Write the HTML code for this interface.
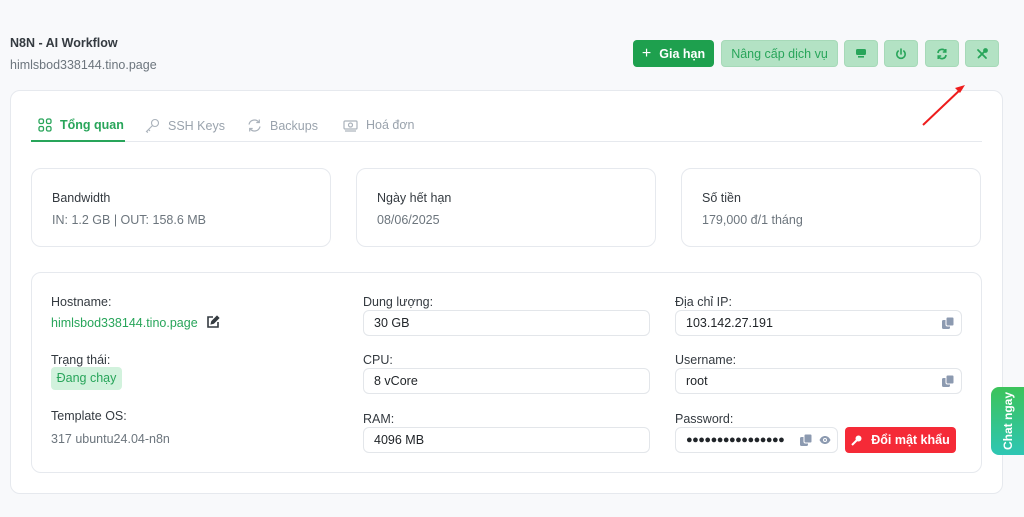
<!DOCTYPE html>
<html><head><meta charset="utf-8"><style>
*{box-sizing:border-box;margin:0;padding:0}
body{width:1024px;height:517px;overflow:hidden;background:#f8f9fb;font-family:"Liberation Sans",sans-serif;color:#212529;position:relative}
.a{position:absolute}
.t13{font-size:12.5px}
.gray{color:#6c757d}
.btn{position:absolute;top:40px;height:27px;border-radius:4px;display:flex;align-items:center;justify-content:center;font-size:12.5px}
.lt{background:#b3e2c4;color:#28a55a;border:1px solid #a6d9b8}
.card{position:absolute;background:#fff;border:1px solid #e6e9ee;border-radius:10px}
.inp{position:absolute;height:26px;border:1px solid #e3e6ea;border-radius:6px;background:#fff;font-size:12.5px;padding-left:10px;line-height:24px}
.lbl{position:absolute;font-size:12.5px;color:#343a40}
.cp{position:absolute;right:6px;top:5px}
</style></head><body>
<div class="a" style="left:10px;top:36px;font-size:12.5px;font-weight:bold;color:#343a40">N8N - AI Workflow</div>
<div class="a gray" style="left:10px;top:58px;font-size:12.5px">himlsbod338144.tino.page</div>

<div class="btn" style="left:633px;width:81px;background:#1ea04e;color:#fff;font-weight:bold"><span style="font-size:16px;font-weight:normal;margin-right:8px">+</span>Gia hạn</div>
<div class="btn lt" style="left:721px;width:117px">Nâng cấp dịch vụ</div>
<div class="btn lt" style="left:844px;width:34px"><svg width="12" height="11" viewBox="0 0 12 11"><rect x="1" y="1" width="10" height="6" rx="1.5" fill="#28a55a"/><rect x="3" y="8" width="6" height="1.6" fill="#28a55a"/></svg></div>
<div class="btn lt" style="left:884px;width:34px"><svg width="12" height="12" viewBox="0 0 12 12" fill="none" stroke="#28a55a" stroke-width="1.6" stroke-linecap="round"><path d="M6 1v5"/><path d="M3.2 3a4.2 4.2 0 1 0 5.6 0"/></svg></div>
<div class="btn lt" style="left:925px;width:34px"><svg width="12" height="12" viewBox="0 0 12 12" fill="none" stroke="#28a55a" stroke-width="1.7"><path d="M2 5a4 4 0 0 1 7.5-1.5"/><path d="M10 7a4 4 0 0 1-7.5 1.5"/><path d="M9.8 1v3h-3M2.2 11V8h3" stroke-width="1.5"/></svg></div>
<div class="btn lt" style="left:965px;width:34px"><svg width="12" height="12" viewBox="0 0 12 12" fill="none" stroke="#28a55a" stroke-width="1.8" stroke-linecap="round"><path d="M2 2l8 8"/><path d="M10 2L4 8"/><path d="M2.5 9.5l1.5-1.5"/><circle cx="9.5" cy="2.5" r="1.5" fill="#28a55a"/></svg></div>

<div class="card" style="left:10px;top:90px;width:993px;height:404px"></div>
<svg class="a" style="left:918px;top:80px;z-index:5" width="52" height="50"><path d="M5 45L44 8" stroke="#ee1c1c" stroke-width="2"/><path d="M47 5l-10 3 5 5z" fill="#ee1c1c"/></svg>

<div class="a" style="left:38px;top:118px;display:flex;align-items:center;font-size:12.5px;color:#28a55a;font-weight:bold">
<svg width="14" height="14" viewBox="0 0 14 14" fill="none" stroke="#28a55a" stroke-width="1.3"><rect x="1" y="1" width="4.5" height="4.5" rx="1.5"/><rect x="8.5" y="1" width="4.5" height="4.5" rx="1.5"/><rect x="1" y="8.5" width="4.5" height="4.5" rx="1.5"/><rect x="8.5" y="8.5" width="4.5" height="4.5" rx="1.5"/></svg><span style="margin-left:8px">Tổng quan</span></div>
<div class="a" style="left:145px;top:118px;display:flex;align-items:center;font-size:12.5px;color:#9aa3ad">
<svg width="15" height="15" viewBox="0 0 15 15" fill="none" stroke="#aab2bb" stroke-width="1.1"><circle cx="10" cy="5" r="3.5"/><path d="M7.5 7.5L1.5 13.5l1.5 1M3.5 11.5l1.5 1.5"/></svg><span style="margin-left:8px">SSH Keys</span></div>
<div class="a" style="left:247px;top:118px;display:flex;align-items:center;font-size:12.5px;color:#9aa3ad">
<svg width="15" height="15" viewBox="0 0 15 15" fill="none" stroke="#aab2bb" stroke-width="1.2"><path d="M2 6.5a5.5 5.5 0 0 1 10-2"/><path d="M13 8.5a5.5 5.5 0 0 1-10 2"/><path d="M12.3 1.5v3h-3M2.7 13.5v-3h3"/></svg><span style="margin-left:8px">Backups</span></div>
<div class="a" style="left:343px;top:118px;display:flex;align-items:center;font-size:12.5px;color:#9aa3ad">
<svg width="15" height="13" viewBox="0 0 15 13" fill="none" stroke="#aab2bb" stroke-width="1.2"><rect x="1" y="2" width="13" height="8" rx="1"/><circle cx="7.5" cy="6" r="2"/><path d="M2 12h11"/></svg><span style="margin-left:8px">Hoá đơn</span></div>
<div class="a" style="left:31px;top:141px;width:951px;height:1px;background:#e6e9ee"></div>
<div class="a" style="left:31px;top:140px;width:94px;height:2px;background:#28a55a"></div>

<div class="card" style="left:31px;top:168px;width:300px;height:79px"><div class="lbl" style="left:20px;top:22px">Bandwidth</div><div class="a gray t13" style="left:20px;top:44px">IN: 1.2 GB | OUT: 158.6 MB</div></div>
<div class="card" style="left:356px;top:168px;width:300px;height:79px"><div class="lbl" style="left:20px;top:22px">Ngày hết hạn</div><div class="a gray t13" style="left:20px;top:44px">08/06/2025</div></div>
<div class="card" style="left:681px;top:168px;width:300px;height:79px"><div class="lbl" style="left:20px;top:22px">Số tiền</div><div class="a gray t13" style="left:20px;top:44px">179,000 đ/1 tháng</div></div>

<div class="card" style="left:31px;top:272px;width:951px;height:201px"></div>
<div class="lbl" style="left:51px;top:295px">Hostname:</div>
<div class="a t13" style="left:51px;top:316px;color:#28a55a">himlsbod338144.tino.page</div>
<svg class="a" style="left:206px;top:315px" width="14" height="14" viewBox="0 0 14 14" fill="none" stroke="#343a40" stroke-width="1.6"><path d="M7 2H2v10h10V7"/><path d="M5.5 8.5l.5-2L11 1.5l1.5 1.5-5 5z" fill="#343a40"/></svg>
<div class="lbl" style="left:51px;top:353px">Trạng thái:</div>
<div class="a t13" style="left:51px;top:367px;width:71px;height:23px;background:#d2f2dd;color:#28a55a;border-radius:4px;line-height:23px;text-align:center">Đang chạy</div>
<div class="lbl" style="left:51px;top:409px">Template OS:</div>
<div class="a gray t13" style="left:51px;top:432px">317 ubuntu24.04-n8n</div>

<div class="lbl" style="left:363px;top:295px">Dung lượng:</div>
<div class="inp" style="left:363px;top:310px;width:287px">30 GB</div>
<div class="lbl" style="left:363px;top:353px">CPU:</div>
<div class="inp" style="left:363px;top:368px;width:287px">8 vCore</div>
<div class="lbl" style="left:363px;top:412px">RAM:</div>
<div class="inp" style="left:363px;top:427px;width:287px">4096 MB</div>

<div class="lbl" style="left:675px;top:295px">Địa chỉ IP:</div>
<div class="inp" style="left:675px;top:310px;width:287px">103.142.27.191<svg class="cp" width="14" height="14" viewBox="0 0 14 14"><rect x="1" y="4" width="8" height="9" rx="1.5" fill="#8c9ab0"/><rect x="5" y="1" width="8" height="9" rx="1.5" fill="#8c9ab0" stroke="#fff" stroke-width="1"/></svg></div>
<div class="lbl" style="left:675px;top:353px">Username:</div>
<div class="inp" style="left:675px;top:368px;width:287px">root<svg class="cp" width="14" height="14" viewBox="0 0 14 14"><rect x="1" y="4" width="8" height="9" rx="1.5" fill="#8c9ab0"/><rect x="5" y="1" width="8" height="9" rx="1.5" fill="#8c9ab0" stroke="#fff" stroke-width="1"/></svg></div>
<div class="lbl" style="left:675px;top:412px">Password:</div>
<div class="inp" style="left:675px;top:427px;width:163px;font-size:11px;letter-spacing:-0.5px">●●●●●●●●●●●●●●●●<svg class="a" style="left:123px;top:5px" width="14" height="14" viewBox="0 0 14 14"><rect x="1" y="4" width="8" height="9" rx="1.5" fill="#8c9ab0"/><rect x="5" y="1" width="8" height="9" rx="1.5" fill="#8c9ab0" stroke="#fff" stroke-width="1"/></svg><svg class="a" style="left:143px;top:7px" width="12" height="10" viewBox="0 0 12 10"><path d="M0.5 5C2 2 4 1 6 1s4 1 5.5 4C10 8 8 9 6 9S2 8 .5 5z" fill="#8c9ab0"/><circle cx="6" cy="5" r="2" fill="#fff"/><circle cx="6" cy="5" r="1" fill="#8c9ab0"/></svg></div>
<div class="a" style="left:845px;top:427px;width:111px;height:26px;background:#f52a37;border-radius:4px;color:#fff;font-size:12.5px;font-weight:bold;display:flex;align-items:center;justify-content:center"><svg width="11" height="11" viewBox="0 0 11 11" style="margin-right:9px"><circle cx="7.5" cy="3.5" r="3" fill="#fff"/><path d="M6 5L1 10" stroke="#fff" stroke-width="2"/></svg>Đổi mật khẩu</div>

<div class="a" style="left:991px;top:387px;width:33px;height:68px;border-radius:8px 0 0 8px;background:linear-gradient(180deg,#3cc35a,#2ec6b4)"><div class="a" style="left:0;top:0;width:33px;height:68px;display:flex;align-items:center;justify-content:center"><span style="transform:rotate(-90deg);white-space:nowrap;color:#fff;font-size:12px;font-weight:bold">Chat ngay</span></div></div>
</body></html>
